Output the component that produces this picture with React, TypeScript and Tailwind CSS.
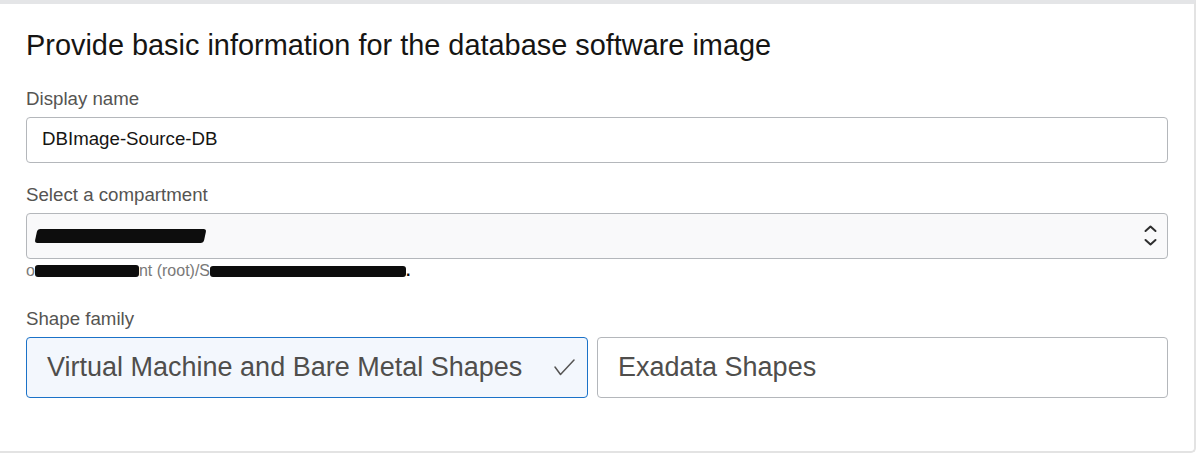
import React from 'react';

const font = "font-['Liberation_Sans',Arial,Helvetica,sans-serif]";

function Redacted({ className }: { className: string }) {
  // black marker strokes over hidden text
  return <span className={`inline-block align-middle bg-[#0d0d0d] text-[#0d0d0d] rounded-[3px] overflow-hidden whitespace-nowrap ${className}`}>hidden</span>;
}

function Label({ children }: { children: React.ReactNode }) {
  return <div className="text-[18.7px] leading-[22px] text-[#555452] mb-[7px]">{children}</div>;
}

export default function App() {
  return (
    <div className={`w-[1198px] h-[454px] bg-white ${font}`}>
      <div className="w-[1196px] border-t-4 border-t-[#e4e5e7] border-r-2 border-r-[#e3e3e3] border-b-2 border-b-[#e3e3e3] rounded-br-[5px] pl-[26px] pr-[26px] pt-[25px] pb-[53px]">
        <h1 className="text-[28.9px] leading-[32px] text-[#161513] mb-[26.5px]">
          Provide basic information for the database software image
        </h1>

        <Label>Display name</Label>
        <div className="h-[46px] border border-[#b4b7bb] rounded-[4px] bg-white flex items-center pl-[15px] text-[18.7px] text-[#161513]">
          DBImage-Source-DB
        </div>

        <div className="mt-[21px]">
          <Label>Select a compartment</Label>
          <div className="h-[46px] border border-[#b4b7bb] rounded-[4px] bg-[#f9f9fa] flex items-center justify-between pl-[9px] pr-[10px]">
            <Redacted className="w-[169px] h-[14px] text-[12px] leading-[14px] -skew-x-12" />
            <svg width="13" height="21" viewBox="0 0 13 21" fill="none" stroke="#2f2f2f" strokeWidth="2" strokeLinecap="round" strokeLinejoin="round">
              <polyline points="1.5,6 6.5,1.5 11.5,6" />
              <polyline points="1.5,15 6.5,19.5 11.5,15" />
            </svg>
          </div>
          <div className="mt-[3.5px] h-[18px] flex items-center text-[16px] text-[#7a7978] whitespace-nowrap">
            <span>o</span>
            <Redacted className="w-[104px] h-[12px] text-[10px] leading-[12px]" />
            <span>nt (root)/S</span>
            <Redacted className="w-[196px] h-[11px] text-[9px] leading-[11px]" />
            <span className="text-[#0d0d0d] font-bold">.</span>
          </div>
        </div>

        <div className="mt-[28px]">
          <Label>Shape family</Label>
          <div className="grid grid-cols-[562px_1fr] gap-[9px]">
            <div className="h-[61px] border border-[#1b72c8] rounded-[4px] bg-[#f3f7fd] flex items-center justify-between pl-[20px] pr-[12px] text-[27px] text-[#4f4e4c]">
              <span>Virtual Machine and Bare Metal Shapes</span>
              <svg width="21" height="17" viewBox="0 0 21 17" fill="none" stroke="#555453" strokeWidth="1.5" strokeLinecap="round" strokeLinejoin="round">
                <polyline points="1,8 6.5,15.5 20,1" />
              </svg>
            </div>
            <div className="h-[61px] border border-[#b4b7bb] rounded-[4px] bg-white flex items-center pl-[20px] text-[27px] text-[#4f4e4c]">
              Exadata Shapes
            </div>
          </div>
        </div>
      </div>
    </div>
  );
}
